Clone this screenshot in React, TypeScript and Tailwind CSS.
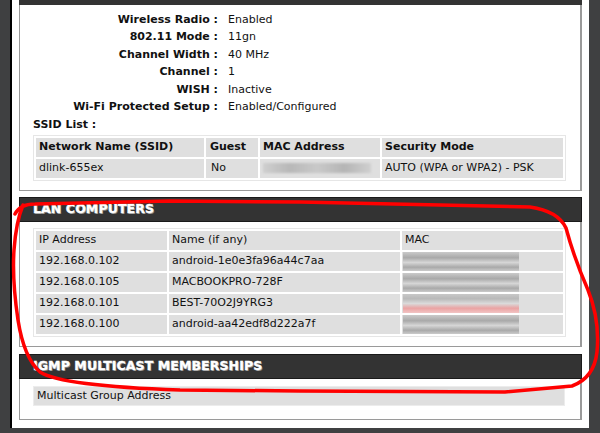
const font = { fontFamily: '"DejaVu Sans", Verdana, sans-serif' };

const wireless = [
  ['Wireless Radio', 'Enabled'],
  ['802.11 Mode', '11gn'],
  ['Channel Width', '40 MHz'],
  ['Channel', '1'],
  ['WISH', 'Inactive'],
  ['Wi-Fi Protected Setup', 'Enabled/Configured'],
];

const lan = [
  ['192.168.0.102', 'android-1e0e3fa96a44c7aa'],
  ['192.168.0.105', 'MACBOOKPRO-728F'],
  ['192.168.0.101', 'BEST-70O2J9YRG3'],
  ['192.168.0.100', 'android-aa42edf8d222a7f'],
];

function Header({ title }: { title: string }) {
  return (
    <div className="h-[25px] bg-[#333333] border border-[#1a1a1a] flex items-center pl-[13px]">
      <span className="text-white font-bold text-[12.5px] tracking-[0.1px] [-webkit-text-stroke:0.4px_white] [text-shadow:1px_1px_0_#888]">
        {title}
      </span>
    </div>
  );
}

function Blur({ pink }: { pink?: boolean }) {
  return (
    <div
      className={
        pink
          ? 'h-[19px] w-[116px] blur-[0.6px] bg-[linear-gradient(180deg,#c8c8c8_0%,#b9b9b9_25%,#dadada_50%,#eaa3a3_75%,#f2c4c4_100%)]'
          : 'h-[19px] w-[116px] blur-[0.6px] bg-[linear-gradient(180deg,#cacaca_0%,#a9a9a9_30%,#d6d6d6_55%,#a9a9a9_80%,#cbcbcb_100%)]'
      }
    />
  );
}

export default function App() {
  return (
    <div className="relative w-[600px] h-[433px] overflow-hidden bg-[#3f4041] text-[11px] text-[#111]" style={font}>
      <div className="ml-[10px] w-[579px] h-[428px] border-l-2 border-black bg-white px-[7px]">
        <div className="h-[5px] bg-[#333333]" />
        <div className="h-[186px] border border-t-0 border-[#9a9a9a] border-r-2 pt-[6px]">
          {wireless.map(([k, v]) => (
            <div key={k} className="flex h-[17.5px] items-center">
              <div className="w-[198px] text-right font-bold">{k} :</div>
              <div className="pl-[10px]">{v}</div>
            </div>
          ))}
          <div className="h-[17.5px] flex items-center pl-[13px] font-bold">SSID List :</div>
          <table className="ml-[13px] mt-[1px] w-[533px] border-separate border-spacing-[2px] border border-[#e6e6e6]">
            <tbody>
              <tr className="h-[19px] font-bold">
                <td className="w-[168px] bg-[#dfdfdf] px-[3px]">Network Name (SSID)</td>
                <td className="w-[52px] bg-[#dfdfdf] px-[4px]">Guest</td>
                <td className="w-[120px] bg-[#dfdfdf] px-[3px]">MAC Address</td>
                <td className="bg-[#dfdfdf] px-[3px]">Security Mode</td>
              </tr>
              <tr className="h-[19px]">
                <td className="bg-[#dfdfdf] px-[3px]">dlink-655ex</td>
                <td className="bg-[#dfdfdf] px-[5px]">No</td>
                <td className="bg-[#dfdfdf] px-[3px]">
                  <div className="h-[10px] w-[108px] bg-[linear-gradient(90deg,#cfcfcf,#b8b8b8,#c9c9c9,#b5b5b5,#d0d0d0)] blur-[1px]" />
                </td>
                <td className="bg-[#dfdfdf] px-[3px]">AUTO (WPA or WPA2) - PSK</td>
              </tr>
            </tbody>
          </table>
        </div>

        <div className="mt-[6px]">
          <Header title="LAN COMPUTERS" />
          <div className="h-[125px] border border-t-0 border-r-2 border-[#9a9a9a] pt-[6px]">
            <table className="ml-[13px] w-[533px] border-separate border-spacing-[2px] border border-[#e6e6e6]">
              <tbody>
                <tr className="h-[19px]">
                  <td className="w-[131px] bg-[#dfdfdf] px-[3px]">IP Address</td>
                  <td className="w-[231px] bg-[#dfdfdf] px-[3px]">Name (if any)</td>
                  <td className="bg-[#dfdfdf] px-[3px]">MAC</td>
                </tr>
                {lan.map(([ip, name], i) => (
                  <tr key={ip} className="h-[18.5px]">
                    <td className="bg-[#dfdfdf] px-[3px]">{ip}</td>
                    <td className="bg-[#dfdfdf] px-[3px]">{name}</td>
                    <td className="bg-[#dfdfdf] px-[1px] py-0">
                      <Blur pink={i === 2} />
                    </td>
                  </tr>
                ))}
              </tbody>
            </table>
          </div>
        </div>

        <div className="mt-[7px]">
          <Header title="IGMP MULTICAST MEMBERSHIPS" />
          <div className="h-[41px] border border-t-0 border-r-2 border-[#9a9a9a] pt-[7px]">
            <div className="ml-[13px] w-[532px] h-[20px] bg-[#dfdfdf] border border-[#ececec] flex items-center px-[3px]">
              Multicast Group Address
            </div>
          </div>
        </div>
      </div>

      <svg className="absolute inset-0 pointer-events-none" width="600" height="433" viewBox="0 0 600 433">
        <path
          d="M 15 214 Q 20 204 35 204 L 170 201 L 300 202 L 530 207 Q 558 211 566 228 Q 574 258 588 290 Q 600 320 597 352 Q 594 378 572 386 L 505 392 L 300 391 L 180 390 Q 62 386 40 372 Q 24 358 18 320 Q 12 280 14 250 Q 16 222 23 205"
          fill="none"
          stroke="#ff0000"
          strokeWidth="3.5"
          strokeLinecap="round"
          strokeLinejoin="round"
        />
      </svg>
    </div>
  );
}
